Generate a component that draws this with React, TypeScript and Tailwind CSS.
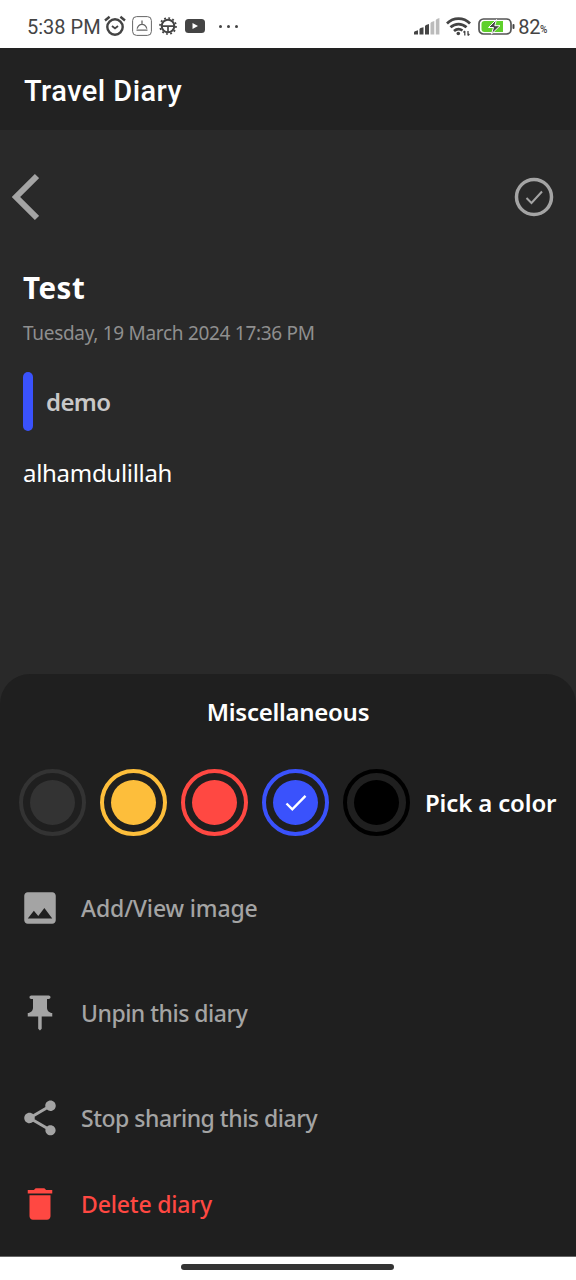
import type { ReactNode } from "react";
import { MdDelete, MdImage, MdPushPin, MdShare } from "react-icons/md";

function StatusBar() {
  return (
    <header className="flex h-12 items-center bg-white pl-[27px] pr-[27px] pt-[4px] font-['Roboto',sans-serif] text-[#444]">
      <span className="mt-[2px] text-[20px] leading-6 whitespace-nowrap">5:38 PM</span>
      <svg className="ml-[3px]" width="22" height="22" viewBox="0 0 22 22" fill="none" stroke="#444" strokeWidth="2.4">
        <circle cx="11" cy="12" r="7.7" />
        <path d="M1 5.5 5.6 1.8M21 5.5 16.4 1.8" />
        <path d="m8 11 3 2.4L14 11" strokeWidth="1.9" />
      </svg>
      <svg className="ml-[6px]" width="20" height="20" viewBox="0 0 20 20" fill="none" stroke="#666" strokeWidth="1">
        <rect x="0.6" y="0.6" width="18.8" height="18.8" rx="4" />
        <path d="M4.5 14.2h11M5.2 12.6C6 9.6 8 8.4 10 8.4s4 1.200 4.800 4.200M10 4.500v3.500" strokeWidth="1.300" />
      </svg>
      <svg className="ml-[7px]" width="18" height="18" viewBox="0 0 18 18" fill="none" stroke="#444">
        <circle cx="9" cy="9" r="6.300" strokeWidth="2" />
        <circle cx="9" cy="9" r="8" strokeWidth="1.700" strokeDasharray="1.900 2.290" />
        <path d="M3 9.200h12M9 9.200V15" strokeWidth="1.700" />
      </svg>
      <svg className="ml-[8px]" width="20" height="14" viewBox="0 0 20 14">
        <rect width="20" height="14" rx="3.500" fill="#444" />
        <path d="M7.500 4v6l5.500-3z" fill="#fff" />
      </svg>
      <span className="ml-[14px] flex gap-[5px]">
        <i className="size-[3px] rounded-full bg-[#444]" />
        <i className="size-[3px] rounded-full bg-[#444]" />
        <i className="size-[3px] rounded-full bg-[#444]" />
      </span>
      <svg className="ml-auto" width="26" height="17" viewBox="0 0 26 17" fill="#444">
        <path d="M0 16.500v-2q0-1 1-1.300l3-.9v4.200zM5.500 16.500v-5.500l1-1 3-.8v7.300zM11 16.500V8l1-1 3-.9v10.400z" />
        <path d="M16.500 16.500V5l1-1 2.800-.9v13.400zM21.800 16.500V2l1-1 2.600-.9v16.400z" fill="#bbb" />
      </svg>
      <svg className="ml-[6px]" width="25" height="19" viewBox="0 0 25 19" fill="none" stroke="#444" strokeWidth="2.700">
        <path d="M1 6.500c6.500-6.500 16.500-6.500 23 0M4.500 10.300c4.700-4.300 11.300-4.300 16 0M8 14c2.700-2.300 5.800-2.300 8.500-.5" />
        <circle cx="12.300" cy="16.500" r="1.800" fill="#444" stroke="none" />
        <path d="M18.800 18.500v-4.500M22 14v4.500M17.500 15.500l1.300-1.500M22 18.500l1.400-1.500" strokeWidth="1.300" />
      </svg>
      <svg className="ml-[7px]" width="37" height="17" viewBox="0 0 37 17">
        <rect x="1" y="1" width="32" height="15" rx="4.500" fill="#fff" stroke="#555" strokeWidth="1.700" />
        <path d="M6.500 3H25v11H6.500Q3.500 14 3.500 11V6Q3.500 3 6.500 3Z" fill="#5fd02c" />
        <path d="M18.500 1.500 10.500 9.500h5L13.500 16l8.500-8.300h-5.200z" fill="#444" stroke="#fff" strokeWidth="1" />
        <rect x="34.500" y="6" width="2" height="5" rx="1" fill="#444" />
      </svg>
      <span className="mt-[2px] ml-[3px] text-[20px] leading-6 tracking-[-0.4px]">82</span>
      <span className="w-[9px] pt-[7px] text-[10px] leading-3 font-medium">%</span>
    </header>
  );
}

function Swatch({ ring, dot, children }: { ring: string; dot: string; children?: ReactNode }) {
  return (
    <button className={`flex size-[67px] items-center justify-center rounded-full border-4 ${ring}`}>
      <span className={`flex size-[45px] items-center justify-center rounded-full ${dot}`}>{children}</span>
    </button>
  );
}

function Row({ icon, label, text, className }: { icon: ReactNode; label: string; text: string; className: string }) {
  return (
    <button className={`flex w-full items-center pl-[19px] ${className}`}>
      {icon}
      <span className={`ml-[20px] whitespace-nowrap text-[23px] leading-8 font-medium ${text}`}>{label}</span>
    </button>
  );
}

export default function App() {
  return (
    <div className="flex h-[1280px] w-[576px] flex-col overflow-hidden bg-[#292929] font-['Noto_Sans',sans-serif]">
      <StatusBar />
      <div className="flex h-[82px] items-center bg-[#222] pl-6 pt-[5px] font-['Roboto',sans-serif] text-[29px] font-medium text-white">
        <h1 className="tracking-[0.45px]">Travel Diary</h1>
      </div>
      <main className="flex h-[544px] flex-col px-[23px]">
        <nav className="-ml-[14px] mt-[43px] flex h-[48px] items-center justify-between">
          <svg width="30" height="48" viewBox="0 0 30 48" fill="none" stroke="#a4a4a4" strokeWidth="6">
            <path d="M28 3 7 24l21 21" />
          </svg>
          <svg className="-mr-px" width="40" height="40" viewBox="0 0 40 40" fill="none" stroke="#a4a4a4">
            <circle cx="20" cy="20" r="17.500" strokeWidth="3.500" />
            <path d="m12.500 21 5 5L28 14.500" strokeWidth="2" />
          </svg>
        </nav>
        <h2 className="mt-[46px] text-[29.5px] leading-[42px] font-bold tracking-[0.5px] text-white">Test</h2>
        <p className="mt-[10px] text-[19px] leading-7 font-normal tracking-[-0.3px] whitespace-nowrap text-[#8f8f8f]">Tuesday, 19 March 2024 17:36 PM</p>
        <div className="mt-[25px] flex h-[59px] items-center">
          <i className="h-full w-[10px] rounded-full bg-[#3a52fc]" />
          <span className="ml-[13px] text-[24px] leading-8 font-semibold tracking-[-0.6px] text-[#c8c8c8]">demo</span>
        </div>
        <p className="mt-[25px] text-[24px] leading-[34px] tracking-[-0.3px] text-white">alhamdulillah</p>
      </main>
      <section className="h-[582px] rounded-t-[30px] bg-[#1f1f1f] text-white">
        <h3 className="pt-[21px] text-center text-[24px] leading-[34px] font-semibold tracking-[-0.27px]">Miscellaneous</h3>
        <div className="mt-[40px] flex h-[67px] items-center gap-[14px] pl-[19px]">
          <Swatch ring="border-[#333]" dot="bg-[#333]" />
          <Swatch ring="border-[#fdbe3b]" dot="bg-[#fdbe3b]" />
          <Swatch ring="border-[#ff4842]" dot="bg-[#ff4842]" />
          <Swatch ring="border-[#3a52fc]" dot="bg-[#3a52fc]">
            <svg width="22" height="18" viewBox="0 0 22 18" fill="none" stroke="#fff" strokeWidth="2.400">
              <path d="m1.500 9.500 5.800 5.800L20.500 1.800" />
            </svg>
          </Swatch>
          <Swatch ring="border-black" dot="bg-black" />
          <span className="ml-[1px] text-[24px] leading-[34px] font-semibold tracking-[-0.15px] whitespace-nowrap">Pick a color</span>
        </div>
        <Row className="mt-[51px] h-[42px] text-[#a4a4a4]" text="tracking-[-0.15px]" icon={<MdImage size={42} />} label="Add/View image" />
        <Row className="mt-[63px] h-[42px] text-[#a4a4a4]" text="tracking-[-0.5px]" icon={<MdPushPin size={42} />} label="Unpin this diary" />
        <Row className="mt-[63px] h-[42px] text-[#a4a4a4]" text="tracking-[-0.48px]" icon={<MdShare size={42} />} label="Stop sharing this diary" />
        <Row className="mt-[44px] h-[42px] text-[#ff4842]" text="tracking-[-0.17px]" icon={<MdDelete size={42} />} label="Delete diary" />
      </section>
      <footer className="flex h-6 justify-center border-t border-[#666] bg-white pt-[7px] pr-px">
        <i className="h-[6px] w-[213px] rounded-full bg-[#333]" />
      </footer>
    </div>
  );
}
